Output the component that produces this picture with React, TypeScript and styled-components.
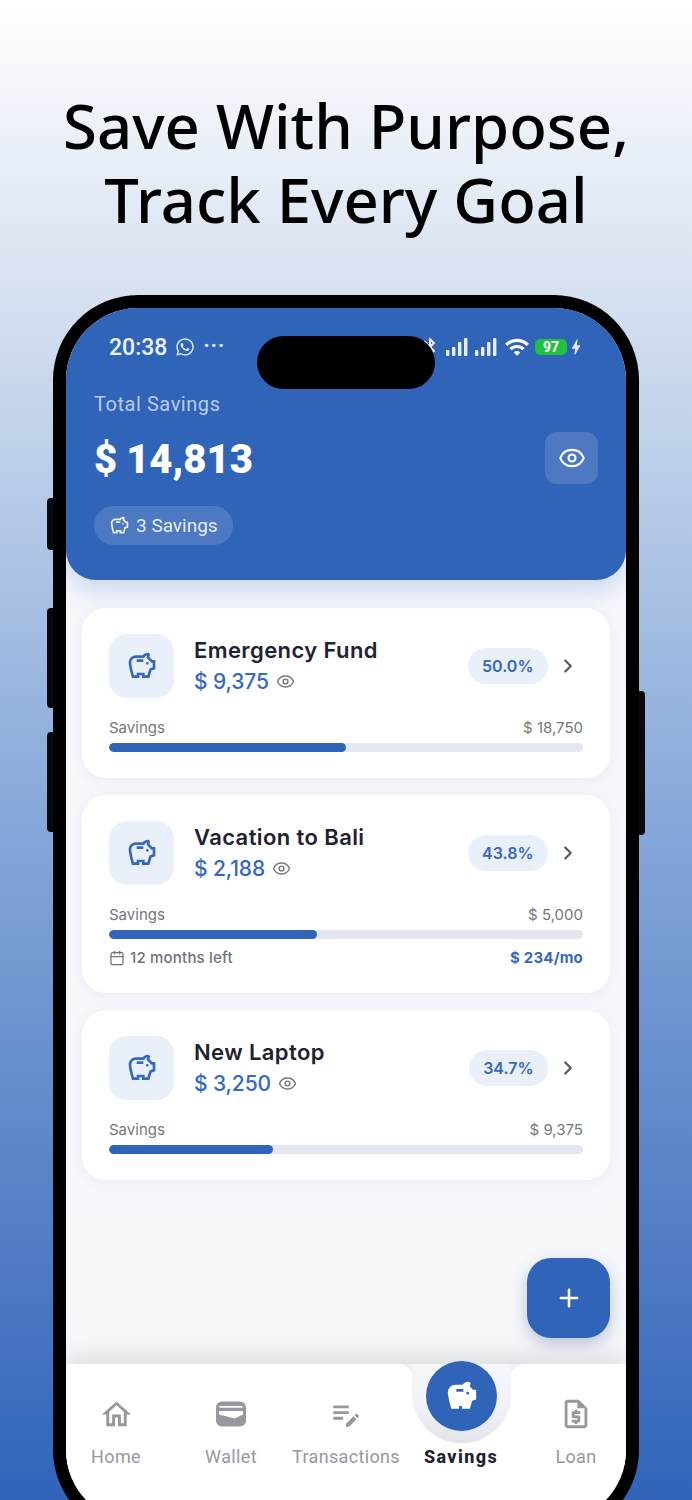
import React from 'react';
import styled, { createGlobalStyle } from 'styled-components';
import { Calendar, Eye, ChevronRight, Plus } from 'lucide-react';
import { FaWhatsapp } from 'react-icons/fa';
import {
  MdBluetooth,
  MdBolt,
  MdEditNote,
  MdOutlineHome,
  MdOutlineRequestQuote,
  MdOutlineSavings,
  MdSavings,
  MdWifi,
} from 'react-icons/md';

const GlobalStyle = createGlobalStyle`
  html, body {
    margin: 0;
    padding: 0;
  }
  body {
    font-family: Inter, "Liberation Sans", sans-serif;
  }
  * {
    box-sizing: border-box;
  }
`;

const Page = styled.div`
  width: 692px;
  height: 1500px;
  overflow: hidden;
  background: linear-gradient(180deg, #ffffff 0%, #d5e0f0 20%, #86a7d9 55%, #3163b9 100%);
`;

const Headline = styled.h1`
  margin: 0;
  padding-top: 88px;
  font-family: "Noto Sans", sans-serif;
  font-size: 61.6px;
  font-weight: 500;
  line-height: 74px;
  text-align: center;
  color: #000;
  height: 295px;
`;

const Phone = styled.div`
  position: relative;
  width: 586px;
  height: 1240px;
  margin-left: 53px;
  background: #000;
  border-radius: 85px;
  padding: 13px;
`;

const SideKey = styled.div<{ $side: 'left' | 'right'; $top: number; $height: number }>`
  position: absolute;
  top: ${p => p.$top}px;
  height: ${p => p.$height}px;
  width: 6px;
  background: #07090c;
  ${p => (p.$side === 'left' ? 'left: -6px; border-radius: 4px 0 0 4px;' : 'right: -6px; border-radius: 0 4px 4px 0;')}
`;

const Screen = styled.div`
  position: relative;
  height: 100%;
  display: flex;
  flex-direction: column;
  background: #f5f7fb;
  border-radius: 72px;
  overflow: hidden;
`;

const Island = styled.div`
  position: absolute;
  top: 28px;
  left: 191px;
  width: 178px;
  height: 53px;
  background: #000;
  border-radius: 27px;
  z-index: 3;
`;

const Header = styled.header`
  height: 272px;
  flex: none;
  padding: 22px 28px 0;
  background: #3064b9;
  border-radius: 0 0 30px 30px;
  box-shadow: 0 10px 24px rgba(48, 100, 185, 0.22);
  color: #fff;
  position: relative;
  z-index: 2;
`;

const StatusBar = styled.div`
  height: 34px;
  padding: 0 12px 0 15px;
  display: flex;
  align-items: center;
  justify-content: space-between;
`;

const StatusGroup = styled.div`
  display: flex;
  align-items: center;
  gap: 5px;
`;

const Clock = styled.span`
  font-family: Roboto, sans-serif;
  font-size: 23px;
  font-weight: 500;
  margin-right: 3px;
  color: #eef3fb;
`;

const Dots = styled.span`
  font-family: Roboto, sans-serif;
  font-size: 22px;
  font-weight: 700;
  line-height: 20px;
  letter-spacing: 0.5px;
  margin: -3px 0 0 3px;
  color: #dfe7f5;
`;

const Battery = styled.span`
  width: 32px;
  height: 16px;
  border-radius: 5px;
  background: #1fc23f;
  font-family: Roboto, sans-serif;
  font-size: 14px;
  font-weight: 700;
  line-height: 16px;
  text-align: center;
`;

const ChargeBolt = styled(MdBolt)`
  margin-left: -6px;
  color: #dfe7f5;
`;

const TotalLabel = styled.div`
  margin-top: 28px;
  font-family: Roboto, sans-serif;
  font-size: 20px;
  letter-spacing: 0.55px;
  line-height: 24px;
  color: rgba(255, 255, 255, 0.68);
`;

const TotalRow = styled.div`
  display: flex;
  align-items: center;
  justify-content: space-between;
  margin-top: 14px;
`;

const TotalAmount = styled.div`
  margin-top: 4px;
  font-family: Roboto, sans-serif;
  font-size: 40px;
  font-weight: 900;
  line-height: 52px;
  word-spacing: -1px;
`;

const EyeButton = styled.div`
  width: 53px;
  height: 52px;
  border-radius: 12px;
  background: rgba(255, 255, 255, 0.14);
  display: flex;
  align-items: center;
  justify-content: center;
`;

const CountChip = styled.div`
  display: inline-flex;
  align-items: center;
  gap: 6px;
  height: 39px;
  margin-top: 20px;
  padding: 0 15px;
  border-radius: 20px;
  background: rgba(255, 255, 255, 0.14);
  font-family: Roboto, sans-serif;
  font-size: 19px;
  color: rgba(255, 255, 255, 0.88);
`;

const CardList = styled.main`
  flex: 1;
  display: flex;
  flex-direction: column;
  gap: 17px;
  padding: 28px 16px 0;
`;

const Card = styled.section`
  background: #fff;
  border-radius: 24px;
  padding: 26px 27px 26px;
  box-shadow: 0 2px 14px rgba(60, 80, 130, 0.06);
`;

const CardTop = styled.div`
  display: flex;
  align-items: center;
`;

const IconBox = styled.div`
  width: 65px;
  height: 64px;
  flex: none;
  border-radius: 18px;
  background: #e9f0f9;
  color: #3568c0;
  display: flex;
  align-items: center;
  justify-content: center;
`;

const CardInfo = styled.div`
  flex: 1;
  margin-left: 20px;
`;

const CardTitle = styled.div`
  font-size: 22px;
  font-weight: 600;
  letter-spacing: 0.4px;
  line-height: 30px;
  color: #1f2231;
`;

const CardAmount = styled.div`
  display: flex;
  align-items: center;
  gap: 7px;
  font-size: 21px;
  font-weight: 500;
  letter-spacing: -0.1px;
  line-height: 33px;
  color: #3568c0;
`;

const Percent = styled.div`
  height: 36px;
  padding: 0 14.5px;
  border-radius: 18px;
  background: #e9f0f9;
  color: #3568c0;
  font-size: 16px;
  font-weight: 600;
  line-height: 36px;
`;

const ChevronWrap = styled.div`
  width: 40px;
  display: flex;
  justify-content: center;
  color: #55585f;
  margin-right: -5px;
`;

const MetaRow = styled.div`
  display: flex;
  justify-content: space-between;
  margin-top: 21px;
  font-size: 15px;
  line-height: 18px;
  color: #74777f;
`;

const Track = styled.div`
  height: 9px;
  margin-top: 6px;
  border-radius: 5px;
  background: #e3e7ef;
  overflow: hidden;
`;

const Fill = styled.div`
  height: 100%;
  border-radius: 5px;
  background: #3064b9;
`;

const FootRow = styled.div`
  display: flex;
  align-items: center;
  justify-content: space-between;
  margin-top: 10px;
  font-size: 15px;
  font-weight: 500;
  letter-spacing: 0.2px;
  line-height: 18px;
  color: #6f727a;
`;

const MonthsLeft = styled.div`
  display: flex;
  align-items: center;
  gap: 5px;
`;

const Monthly = styled.div`
  font-weight: 700;
  color: #3568c0;
`;

const Fab = styled.div`
  position: absolute;
  right: 16px;
  bottom: 184px;
  width: 83px;
  height: 80px;
  border-radius: 24px;
  background: #3064b9;
  box-shadow: 0 6px 16px rgba(40, 60, 110, 0.28);
  color: #fff;
  display: flex;
  align-items: center;
  justify-content: center;
`;

const BottomNav = styled.nav`
  position: relative;
  height: 158px;
  flex: none;
  background: #fff;
  box-shadow: 0 -8px 20px rgba(0, 0, 0, 0.1);
  display: flex;
  justify-content: center;
  padding-top: 33px;
`;

const Notch = styled.div`
  position: absolute;
  top: 0;
  left: 346px;
  width: 99px;
  height: 79px;
  border-radius: 0 0 50px 50px;
  background: linear-gradient(180deg, #f5f7fb 0%, #f2f3f8 50%, #e3e4e9 100%);
  box-shadow: 0 1px 3px rgba(0, 0, 0, 0.04);

  &::before,
  &::after {
    content: '';
    position: absolute;
    top: 0;
    width: 14px;
    height: 14px;
  }
  &::before {
    left: -14px;
    background: radial-gradient(circle at 0 100%, #fff 14px, #f0f1f6 14.5px);
  }
  &::after {
    right: -14px;
    background: radial-gradient(circle at 100% 100%, #fff 14px, #f0f1f6 14.5px);
  }
`;

const ActiveCircle = styled.div`
  position: absolute;
  top: -3px;
  left: 14px;
  width: 71px;
  height: 70px;
  border-radius: 50%;
  background: #3064b9;
  color: #fff;
  display: flex;
  align-items: center;
  justify-content: center;
`;

const NavItem = styled.div`
  position: relative;
  flex: none;
  width: 115px;
  display: flex;
  flex-direction: column;
  align-items: center;
  color: #96989f;
`;

const NavIconSlot = styled.div`
  height: 34px;
  display: flex;
  align-items: center;
  justify-content: center;
`;

const NavLabel = styled.div<{ $active?: boolean }>`
  margin-top: 16px;
  font-family: Roboto, sans-serif;
  font-size: 18px;
  line-height: 20px;
  white-space: nowrap;
  font-weight: ${p => (p.$active ? 800 : 400)};
  letter-spacing: ${p => (p.$active ? '1.4px' : '0.35px')};
  color: ${p => (p.$active ? '#1f2231' : '#96989f')};
`;

const SignalBars = () => (
  <svg width="24" height="20" viewBox="0 0 24 20" fill="#e8eef8">
    <rect x="0" y="13" width="3.4" height="6" rx="1" />
    <rect x="6" y="10" width="3.4" height="9" rx="1" />
    <rect x="12" y="5" width="3.4" height="14" rx="1" />
    <rect x="18" y="1" width="3.4" height="18" rx="1" />
  </svg>
);

const WalletIcon = () => (
  <svg width="30" height="26" viewBox="0 0 30 26">
    <rect x="0" y="0.5" width="30" height="25" rx="6" fill="#96989f" />
    <path d="M3.5 5h23v1.8h-23z" fill="#fff" />
    <path d="M3 10h24v3.5l-8.5 4L3 13.5z" fill="#fff" />
  </svg>
);

interface Goal {
  name: string;
  saved: string;
  percent: number;
  target: string;
  months?: string;
  monthly?: string;
}

const goals: Goal[] = [
  { name: 'Emergency Fund', saved: '$ 9,375', percent: 50.0, target: '$ 18,750' },
  { name: 'Vacation to Bali', saved: '$ 2,188', percent: 43.8, target: '$ 5,000', months: '12 months left', monthly: '$ 234/mo' },
  { name: 'New Laptop', saved: '$ 3,250', percent: 34.7, target: '$ 9,375' },
];

const navItems = [
  { label: 'Home', icon: <MdOutlineHome size={35} /> },
  { label: 'Wallet', icon: <WalletIcon /> },
  { label: 'Transactions', icon: <MdEditNote size={34} /> },
  { label: 'Savings', active: true },
  { label: 'Loan', icon: <MdOutlineRequestQuote size={34} /> },
];

const App: React.FC = () => {
  return (
    <Page>
      <GlobalStyle />
      <Headline>
        Save With Purpose,
        <br />
        Track Every Goal
      </Headline>
      <Phone>
        <SideKey $side="left" $top={203} $height={52} />
        <SideKey $side="left" $top={313} $height={100} />
        <SideKey $side="left" $top={437} $height={100} />
        <SideKey $side="right" $top={396} $height={144} />
        <Screen>
          <Island />
          <Header>
            <StatusBar>
              <StatusGroup>
                <Clock>20:38</Clock>
                <FaWhatsapp size={20} color="#dfe7f5" />
                <Dots>···</Dots>
              </StatusGroup>
              <StatusGroup>
                <MdBluetooth size={22} />
                <SignalBars />
                <SignalBars />
                <MdWifi size={26} />
                <Battery>97</Battery>
                <ChargeBolt size={20} />
              </StatusGroup>
            </StatusBar>
            <TotalLabel>Total Savings</TotalLabel>
            <TotalRow>
              <TotalAmount>$ 14,813</TotalAmount>
              <EyeButton>
                <Eye size={28} strokeWidth={1.8} />
              </EyeButton>
            </TotalRow>
            <CountChip>
              <MdOutlineSavings size={21} />3 Savings
            </CountChip>
          </Header>
          <CardList>
            {goals.map(goal => (
              <Card key={goal.name}>
                <CardTop>
                  <IconBox>
                    <MdOutlineSavings size={32} />
                  </IconBox>
                  <CardInfo>
                    <CardTitle>{goal.name}</CardTitle>
                    <CardAmount>
                      {goal.saved}
                      <Eye size={19} color="#74777f" strokeWidth={1.8} />
                    </CardAmount>
                  </CardInfo>
                  <Percent>{goal.percent.toFixed(1)}%</Percent>
                  <ChevronWrap>
                    <ChevronRight size={22} strokeWidth={2.4} />
                  </ChevronWrap>
                </CardTop>
                <MetaRow>
                  <span>Savings</span>
                  <span>{goal.target}</span>
                </MetaRow>
                <Track>
                  <Fill style={{ width: `${goal.percent}%` }} />
                </Track>
                {goal.months && (
                  <FootRow>
                    <MonthsLeft>
                      <Calendar size={16} strokeWidth={1.8} />
                      {goal.months}
                    </MonthsLeft>
                    <Monthly>{goal.monthly}</Monthly>
                  </FootRow>
                )}
              </Card>
            ))}
          </CardList>
          <Fab>
            <Plus size={28} strokeWidth={2.2} />
          </Fab>
          <BottomNav>
            <Notch>
              <ActiveCircle>
                <MdSavings size={34} />
              </ActiveCircle>
            </Notch>
            {navItems.map(item => (
              <NavItem key={item.label}>
                <NavIconSlot>{item.icon}</NavIconSlot>
                <NavLabel $active={item.active}>{item.label}</NavLabel>
              </NavItem>
            ))}
          </BottomNav>
        </Screen>
      </Phone>
    </Page>
  );
};

export default App;
